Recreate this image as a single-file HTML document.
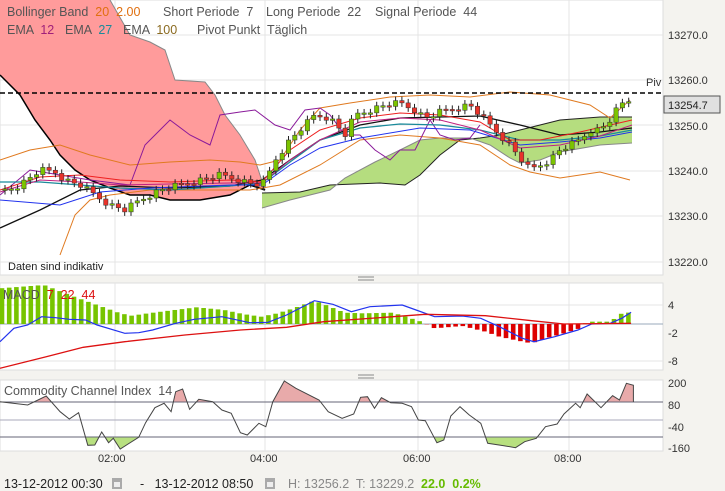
<!DOCTYPE html>
<html><head><meta charset="utf-8"><style>
body{margin:0;width:725px;height:491px;background:#f4f3ef;overflow:hidden;font-family:"Liberation Sans",sans-serif}
svg{position:absolute;left:0;top:0}
text{white-space:pre}
</style></head><body>
<svg id="s" width="725" height="491" xmlns="http://www.w3.org/2000/svg" font-family="Liberation Sans, sans-serif">
<rect x="0" y="0" width="663" height="275" fill="#fff" stroke="#ddd"/>
<rect x="0" y="283" width="663" height="87" fill="#fff" stroke="#ddd"/>
<rect x="0" y="380" width="663" height="71" fill="#fff" stroke="#ddd"/>
<g stroke="#e4e4e4" stroke-width="1">
<path d="M115 0V275M265 0V275M418 0V275M569 0V275M0 35H663M0 80H663M0 125H663M0 171H663M0 216H663M0 262H663"/>
<path d="M115 283V370M265 283V370M418 283V370M569 283V370M0 305H663M0 361H663"/>
<path d="M115 380V451M265 380V451M418 380V451M569 380V451"/>
</g>
<path d="M0 0H110L130 35L150 42L165 50L175 80L205 82L215 95L225 115L240 135L255 160L265 190L250 185L230 195L200 200L170 200L150 195L130 195L110 188L90 180L75 170L60 155L50 140L35 120L20 95L0 75Z" fill="#ff9b9b"/>
<path d="M110 0L130 35L150 42L165 50L175 80L205 82L215 95L225 115L240 135L255 160L265 190" fill="none" stroke="#888"/>
<path d="M0 75L20 95L35 120L50 140L60 155L75 170L90 180L110 188L130 195L150 195L170 200L200 200L230 195L250 185L265 190" fill="none" stroke="#000" stroke-width="1.5"/>
<path d="M262 193L300 192L330 185L380 183L405 185L420 175L440 155L460 140L480 138L500 135L520 130L540 125L560 120L600 117L632 117L632 143L600 145L560 152L540 160L520 163L510 158L490 145L470 138L440 138L420 140L400 150L375 162L345 178L330 190L290 200L262 208Z" fill="#b5dd7f"/>
<path d="M262 193L300 192L330 185L380 183L405 185L420 175L440 155L460 140L480 138L500 135L520 130L540 125L560 120L600 117L632 117" fill="none" stroke="#222"/>
<path d="M262 208L290 200L330 190L345 178L375 162L400 150L420 140L440 138L470 138L490 145L510 158L520 163L540 160L560 152L600 145L632 143" fill="none" stroke="#888"/>
<path d="M0 160L30 150L60 145L90 155L130 165L170 162L210 160L240 162L260 165L280 160L300 130L320 108L350 103L390 97L430 95L470 97L510 92L550 95L590 105L610 118L630 100" fill="none" stroke="#e07a20"/>
<path d="M60 255L75 215L90 200L110 195L150 190L250 190L280 185L320 165L360 140L400 135L440 138L480 145L510 165L530 172L560 178L600 172L630 180" fill="none" stroke="#e07a20"/>
<path d="M0 195L30 170L60 175L90 180L130 185L145 145L160 130L170 120L190 135L210 145L220 115L240 112L255 110L275 125L290 130L305 110L320 108L330 115L345 135L360 135L375 150L390 160L400 150L415 150L430 120L440 135L455 140L470 138L480 125" fill="none" stroke="#8a1a9a"/>
<path d="M0 228L40 210L80 190L120 186L170 188L230 186L262 180L290 160L320 140L360 125L400 118L440 117L480 116L520 125L560 135L600 132L632 128" fill="none" stroke="#111" stroke-width="1.3"/>
<path d="M0 182L40 182L80 185L120 188L170 190L230 186L262 183L290 162L320 140L360 128L400 124L440 125L480 130L520 140L560 140L600 136L632 130" fill="none" stroke="#1a8a9a" stroke-width="1.3"/>
<path d="M0 200L60 205L100 192L150 188L230 185L262 185L290 165L320 148L360 138L420 128L470 130L520 145L560 142L600 138L632 132" fill="none" stroke="#2233ee"/>
<path d="M0 190L40 177L80 175L120 180L170 182L230 180L262 182L290 150L320 130L360 118L400 113L440 115L480 122L510 140L540 140L580 132L632 120" fill="none" stroke="#ee2020"/>
<path d="M0 192L40 180L80 182L120 185L170 184L230 183L262 183L290 160L320 140L360 122L400 118L440 120L480 130L520 148L560 145L600 136L632 125" fill="none" stroke="#c02080"/>
<g id="cand"></g>
<path d="M0 93H663" stroke="#000" stroke-width="1.6" stroke-dasharray="5,3"/>
<text x="646" y="86" font-size="11" fill="#333">Piv</text>
<g font-size="11" fill="#333">
<text x="668" y="39">13270.0</text><text x="668" y="84">13260.0</text><text x="668" y="130">13250.0</text>
<text x="668" y="175">13240.0</text><text x="668" y="220">13230.0</text><text x="668" y="266">13220.0</text>
</g>
<rect x="664" y="96" width="56" height="17" fill="#e0e0e0" stroke="#555"/>
<text x="668" y="109" font-size="11" fill="#222">13254.7</text>
<g font-size="12.5" fill="#555">
<text x="7" y="16">Bollinger Band  <tspan fill="#e07010">20  2.00</tspan></text>
<text x="163" y="16">Short Periode  7</text><text x="266" y="16">Long Periode  22</text><text x="375" y="16">Signal Periode  44</text>
<text x="7" y="34">EMA  <tspan fill="#a0207a">12</tspan></text><text x="65" y="34">EMA  <tspan fill="#1a8a9a">27</tspan></text>
<text x="123" y="34">EMA  <tspan fill="#8a6a20">100</tspan></text><text x="197" y="34">Pivot Punkt  Täglich</text>
</g>
<text x="8" y="270" font-size="11" fill="#222">Daten sind indikativ</text>
<path d="M358 277H374M358 280H374M358 375H374M358 378H374" stroke="#888"/>
<path d="M0 324H663" stroke="#9ab"/>
<g id="macd"></g>
<path id="mb" fill="none" stroke="#2233ee" stroke-width="1.2"/>
<path id="mr" fill="none" stroke="#dd1111" stroke-width="1.3"/>
<text x="3" y="299" font-size="12.5" fill="#555">MACD  <tspan fill="#dd1111">7  22  44</tspan></text>
<g font-size="11" fill="#333"><text x="668" y="309">4</text><text x="668" y="337">-2</text><text x="668" y="365">-8</text></g>
<path id="cgf" fill="#b8e080"/><path id="crf" fill="#e8aaaa"/>
<path d="M0 402H663M0 437H663" stroke="#667"/>
<path d="M0 420H663" stroke="#aab"/>
<path id="cl" fill="none" stroke="#444"/>
<text x="4" y="395" font-size="12.5" fill="#555">Commodity Channel Index  14</text>
<g font-size="11" fill="#333"><text x="668" y="387">200</text><text x="668" y="409">80</text><text x="668" y="431">-40</text><text x="668" y="452">-160</text></g>
<g font-size="11" fill="#333"><text x="98" y="462">02:00</text><text x="250" y="462">04:00</text><text x="403" y="462">06:00</text><text x="554" y="462">08:00</text></g>
<g font-size="12.5">
<text x="4" y="488" fill="#222">13-12-2012 00:30</text>
<rect x="112" y="478" width="10" height="11" fill="#aaa"/><rect x="114" y="482" width="6" height="5" fill="#eee"/>
<text x="140" y="488" fill="#222">-   13-12-2012 08:50</text>
<rect x="265" y="478" width="10" height="11" fill="#aaa"/><rect x="267" y="482" width="6" height="5" fill="#eee"/>
<text x="288" y="488" fill="#888">H: 13256.2  T: 13229.2</text>
<text x="421" y="488" fill="#66bb00" font-weight="bold">22.0  0.2%</text>
</g>
</svg>
<script>
(function(){
function interp(p,x){for(var i=1;i<p.length;i++){if(x<=p[i][0]){var a=p[i-1],b=p[i];return a[1]+(b[1]-a[1])*(x-a[0])/(b[0]-a[0]);}}return p[p.length-1][1];}
var NS="http://www.w3.org/2000/svg";
function el(t,a,par){var e=document.createElementNS(NS,t);for(var k in a)e.setAttribute(k,a[k]);par.appendChild(e);return e;}
var price=[[5,190],[20,185],[40,170],[55,172],[65,180],[80,185],[95,195],[110,205],[125,210],[140,200],[160,190],[180,185],[200,180],[220,175],[240,180],[255,185],[265,182],[275,160],[290,140],[305,125],[315,115],[330,118],[345,135],[355,115],[370,110],[385,105],[400,103],[415,110],[425,118],[440,112],[455,108],[470,105],[480,115],[490,125],[500,135],[510,145],[520,158],[530,170],[540,165],[550,160],[560,150],[570,145],[580,140],[590,130],[600,130],[610,120],[620,105],[630,100]];
var cgr=document.getElementById("cand");var prev=190;var k=0;
for(var x=5;x<=630;x+=6.3){k++;var c=interp(price,x)+((k*37)%7-3);var o=prev;var up=c<o;var t=Math.min(o,c),b=Math.max(o,c);if(b-t<1.5)b=t+1.5;
el("line",{x1:x,x2:x,y1:t-4,y2:b+4,stroke:"#222"},cgr);
el("rect",{x:x-2.2,y:t,width:4.4,height:b-t,fill:up?"#7cc400":"#e8332a",stroke:"#333","stroke-width":0.5},cgr);prev=c;}
var S=2.163;
function cv(p){return p.map(function(q){return[q[0]/S,270+q[1]/3];});}
var hist=cv([[0,55],[95,45],[160,80],[200,100],[230,115],[260,130],[285,137],[320,130],[360,123],[425,112],[485,120],[525,132],[565,140],[600,130],[635,115],[680,92],[710,108],[745,128],[785,130],[850,128],[900,150],[915,157],[940,175],[1000,168],[1050,185],[1080,200],[1120,212],[1150,220],[1180,205],[1220,190],[1250,177],[1270,155],[1320,155],[1345,130],[1365,127]]);
var mg=document.getElementById("macd");
for(var x=2;x<=632;x+=7.2){var y=interp(hist,x);var z=324;
if(y<z)el("rect",{x:x-2.3,y:y,width:4.6,height:z-y,fill:"#77c400"},mg);else el("rect",{x:x-2.3,y:z,width:4.6,height:y-z,fill:"#dd0000"},mg);}
function pd(p){return "M"+p.map(function(q){return q[0].toFixed(1)+" "+q[1].toFixed(1)}).join("L");}
document.getElementById("mb").setAttribute("d",pd(cv([[0,215],[30,175],[60,165],[90,140],[120,143],[150,148],[185,150],[210,165],[270,190],[300,188],[330,180],[380,160],[420,148],[480,140],[540,158],[580,157],[620,135],[680,92],[720,103],[760,125],[800,110],[870,105],[900,120],[940,140],[1000,138],[1040,145],[1080,170],[1130,205],[1155,215],[1200,200],[1250,180],[1280,162],[1320,160],[1345,145],[1365,127]])));
document.getElementById("mr").setAttribute("d",pd(cv([[0,295],[100,260],[180,232],[270,215],[400,195],[520,180],[620,172],[700,155],[850,140],[920,133],[1050,137],[1150,152],[1220,162],[1365,160]])));
var cci=[[0,395],[60,405],[100,378],[130,425],[150,447],[170,428],[190,526],[205,525],[220,486],[235,518],[245,505],[260,537],[300,502],[315,458],[335,413],[355,400],[370,425],[380,365],[395,357],[410,418],[430,388],[460,395],[480,420],[500,430],[520,488],[535,495],[560,460],[575,470],[590,395],[615,333],[640,355],[690,390],[710,425],[740,445],[765,432],[780,382],[795,380],[810,415],[825,383],[845,398],[870,400],[890,410],[905,450],[920,452],[945,518],[960,510],[975,438],[995,410],[1015,435],[1040,460],[1055,520],[1090,527],[1115,533],[1135,515],[1160,505],[1180,470],[1205,462],[1220,432],[1245,400],[1255,413],[1270,372],[1300,413],[1325,377],[1340,390],[1355,340],[1370,346]];
var cp=cv(cci);var lst=cp[cp.length-1];cp.push([lst[0]+0.01,402]);
document.getElementById("cl").setAttribute("d",pd(cp));
var TOP=402,BOT=437;
var a1=[],a2=[];for(var x=0;x<=lst[0];x+=0.5){var y=interp(cp,x);a1.push([x,Math.min(y,TOP)]);a2.push([x,Math.max(y,BOT)]);}
document.getElementById("crf").setAttribute("d",pd(a1)+"L"+lst[0]+" "+TOP+"L0 "+TOP+"Z");
document.getElementById("cgf").setAttribute("d",pd(a2)+"L"+lst[0]+" "+BOT+"L0 "+BOT+"Z");
})();
</script>
</body></html>
